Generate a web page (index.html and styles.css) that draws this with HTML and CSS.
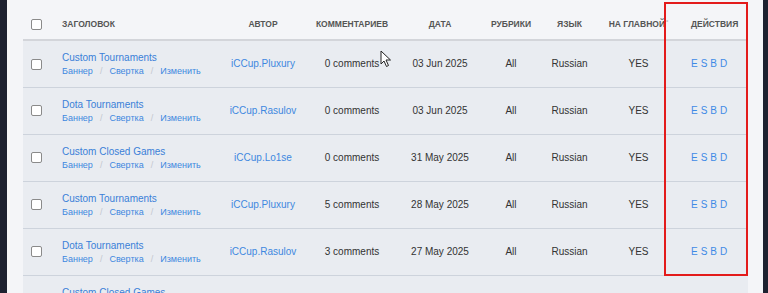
FILE: index.html
```html
<!DOCTYPE html>
<html lang="ru">

<head>
    <meta charset="UTF-8">
    <meta name="viewport" content="width=device-width, initial-scale=1.0">
    <title>Новости</title>
    <link rel="stylesheet" href="styles.css">
</head>

<body>
    <div class="panel">
        <table class="news-table">
            <colgroup>
                <col class="col-check">
                <col class="col-title">
                <col class="col-author">
                <col class="col-comments">
                <col class="col-date">
                <col class="col-rubric">
                <col class="col-lang">
                <col class="col-main">
                <col class="col-actions">
            </colgroup>
            <thead>
                <tr>
                    <th><span class="check"></span></th>
                    <th class="left">Заголовок</th>
                    <th>Автор</th>
                    <th>Комментариев</th>
                    <th>Дата</th>
                    <th>Рубрики</th>
                    <th>Язык</th>
                    <th>На главной<span class="mark">*</span></th>
                    <th class="actions">Действия</th>
                </tr>
            </thead>
            <tbody>
                <tr>
                    <td><span class="check"></span></td>
                    <td class="left">
                        <a class="title" href="#">Custom Tournaments</a>
                        <div class="sub"><a href="#">Баннер</a><span class="sep">/</span><a href="#">Свертка</a><span class="sep">/</span><a href="#">Изменить</a></div>
                    </td>
                    <td><a class="author" href="#">iCCup.Pluxury</a></td>
                    <td>0 comments</td>
                    <td>03 Jun 2025</td>
                    <td>All</td>
                    <td>Russian</td>
                    <td>YES</td>
                    <td class="actions"><a href="#">E</a><a href="#">S</a><a href="#">B</a><a href="#">D</a></td>
                </tr>
                <tr>
                    <td><span class="check"></span></td>
                    <td class="left">
                        <a class="title" href="#">Dota Tournaments</a>
                        <div class="sub"><a href="#">Баннер</a><span class="sep">/</span><a href="#">Свертка</a><span class="sep">/</span><a href="#">Изменить</a></div>
                    </td>
                    <td><a class="author" href="#">iCCup.Rasulov</a></td>
                    <td>0 comments</td>
                    <td>03 Jun 2025</td>
                    <td>All</td>
                    <td>Russian</td>
                    <td>YES</td>
                    <td class="actions"><a href="#">E</a><a href="#">S</a><a href="#">B</a><a href="#">D</a></td>
                </tr>
                <tr>
                    <td><span class="check"></span></td>
                    <td class="left">
                        <a class="title" href="#">Custom Closed Games</a>
                        <div class="sub"><a href="#">Баннер</a><span class="sep">/</span><a href="#">Свертка</a><span class="sep">/</span><a href="#">Изменить</a></div>
                    </td>
                    <td><a class="author" href="#">iCCup.Lo1se</a></td>
                    <td>0 comments</td>
                    <td>31 May 2025</td>
                    <td>All</td>
                    <td>Russian</td>
                    <td>YES</td>
                    <td class="actions"><a href="#">E</a><a href="#">S</a><a href="#">B</a><a href="#">D</a></td>
                </tr>
                <tr>
                    <td><span class="check"></span></td>
                    <td class="left">
                        <a class="title" href="#">Custom Tournaments</a>
                        <div class="sub"><a href="#">Баннер</a><span class="sep">/</span><a href="#">Свертка</a><span class="sep">/</span><a href="#">Изменить</a></div>
                    </td>
                    <td><a class="author" href="#">iCCup.Pluxury</a></td>
                    <td>5 comments</td>
                    <td>28 May 2025</td>
                    <td>All</td>
                    <td>Russian</td>
                    <td>YES</td>
                    <td class="actions"><a href="#">E</a><a href="#">S</a><a href="#">B</a><a href="#">D</a></td>
                </tr>
                <tr>
                    <td><span class="check"></span></td>
                    <td class="left">
                        <a class="title" href="#">Dota Tournaments</a>
                        <div class="sub"><a href="#">Баннер</a><span class="sep">/</span><a href="#">Свертка</a><span class="sep">/</span><a href="#">Изменить</a></div>
                    </td>
                    <td><a class="author" href="#">iCCup.Rasulov</a></td>
                    <td>3 comments</td>
                    <td>27 May 2025</td>
                    <td>All</td>
                    <td>Russian</td>
                    <td>YES</td>
                    <td class="actions"><a href="#">E</a><a href="#">S</a><a href="#">B</a><a href="#">D</a></td>
                </tr>
                <tr class="last">
                    <td></td>
                    <td class="left">
                        <a class="title" href="#">Custom Closed Games</a>
                    </td>
                    <td></td>
                    <td></td>
                    <td></td>
                    <td></td>
                    <td></td>
                    <td></td>
                    <td></td>
                </tr>
            </tbody>
        </table>

        <!-- highlight around the actions column -->
        <div class="highlight"></div>

        <svg class="cursor" width="12" height="18" viewBox="0 0 12 18">
            <path d="M1 1 L1 14 L4 11 L6.5 16.5 L8.5 15.5 L6 10 L10.5 10 Z" fill="#fff" stroke="#222" stroke-width="1" stroke-linejoin="round"/>
        </svg>
    </div>
</body>

</html>
```

FILE: styles.css
```css
body {
    margin: 0;
    padding: 0;
    height: 100vh;
    overflow: hidden;
    background-color: #1d2130;
    font-family: "Liberation Sans", Arial, sans-serif;
    color: #333;
}

.panel {
    position: relative;
    margin-left: 7px;
    width: 756px;
    height: 100%;
    background-color: #f4f5f8;
}

.news-table {
    margin-left: 16px;
    width: 725px;
    border-collapse: collapse;
    table-layout: fixed;
    font-size: 10px;
}

.col-check { width: 27px; }
.col-title { width: 165px; }
.col-author { width: 96px; }
.col-comments { width: 82px; }
.col-date { width: 94px; }
.col-rubric { width: 48px; }
.col-lang { width: 69px; }
.col-main { width: 69px; }
.col-actions { width: 75px; }

.news-table th {
    height: 40px;
    padding: 9px 0 0;
    box-sizing: border-box;
    font-size: 8.5px;
    font-weight: 700;
    color: #555;
    text-transform: uppercase;
    text-align: center;
    white-space: nowrap;
    border-bottom: 2px solid #d3d5da;
}

.news-table td {
    height: 47px;
    padding: 0;
    box-sizing: border-box;
    text-align: center;
    background-color: #e9ecf1;
    border-bottom: 1px solid #cdd3dc;
    white-space: nowrap;
}

.news-table .left {
    text-align: left;
    padding-left: 12px;
}

.news-table .actions {
    text-align: left;
    padding-left: 18px;
}

.news-table .last td {
    vertical-align: top;
    padding-top: 9px;
}

.news-table .last .left {
    padding-left: 12px;
}

.mark {
    font-size: 6px;
    color: #bbb;
    vertical-align: top;
    margin-left: 1px;
}

.check {
    display: inline-block;
    width: 9px;
    height: 9px;
    border: 1px solid #8a8a8a;
    border-radius: 2px;
    background-color: #fff;
    vertical-align: middle;
}

a {
    color: #3e88e0;
    text-decoration: none;
}

.title {
    display: block;
    font-size: 10px;
    line-height: 13px;
    color: #3a80d8;
    margin-top: 1px;
}

.sub {
    font-size: 9px;
    line-height: 13px;
    margin-top: 1px;
}

.sub .sep {
    color: #c3c7cf;
    margin: 0 7px;
}

.author {
    font-size: 10px;
    color: #3e88e0;
}

.actions a {
    margin-right: 3px;
    color: #3e8ae6;
}

.highlight {
    position: absolute;
    left: 657px;
    top: 2px;
    width: 80px;
    height: 270px;
    border: 2px solid #e31b1b;
}

.cursor {
    position: absolute;
    left: 373px;
    top: 50px;
}
```
